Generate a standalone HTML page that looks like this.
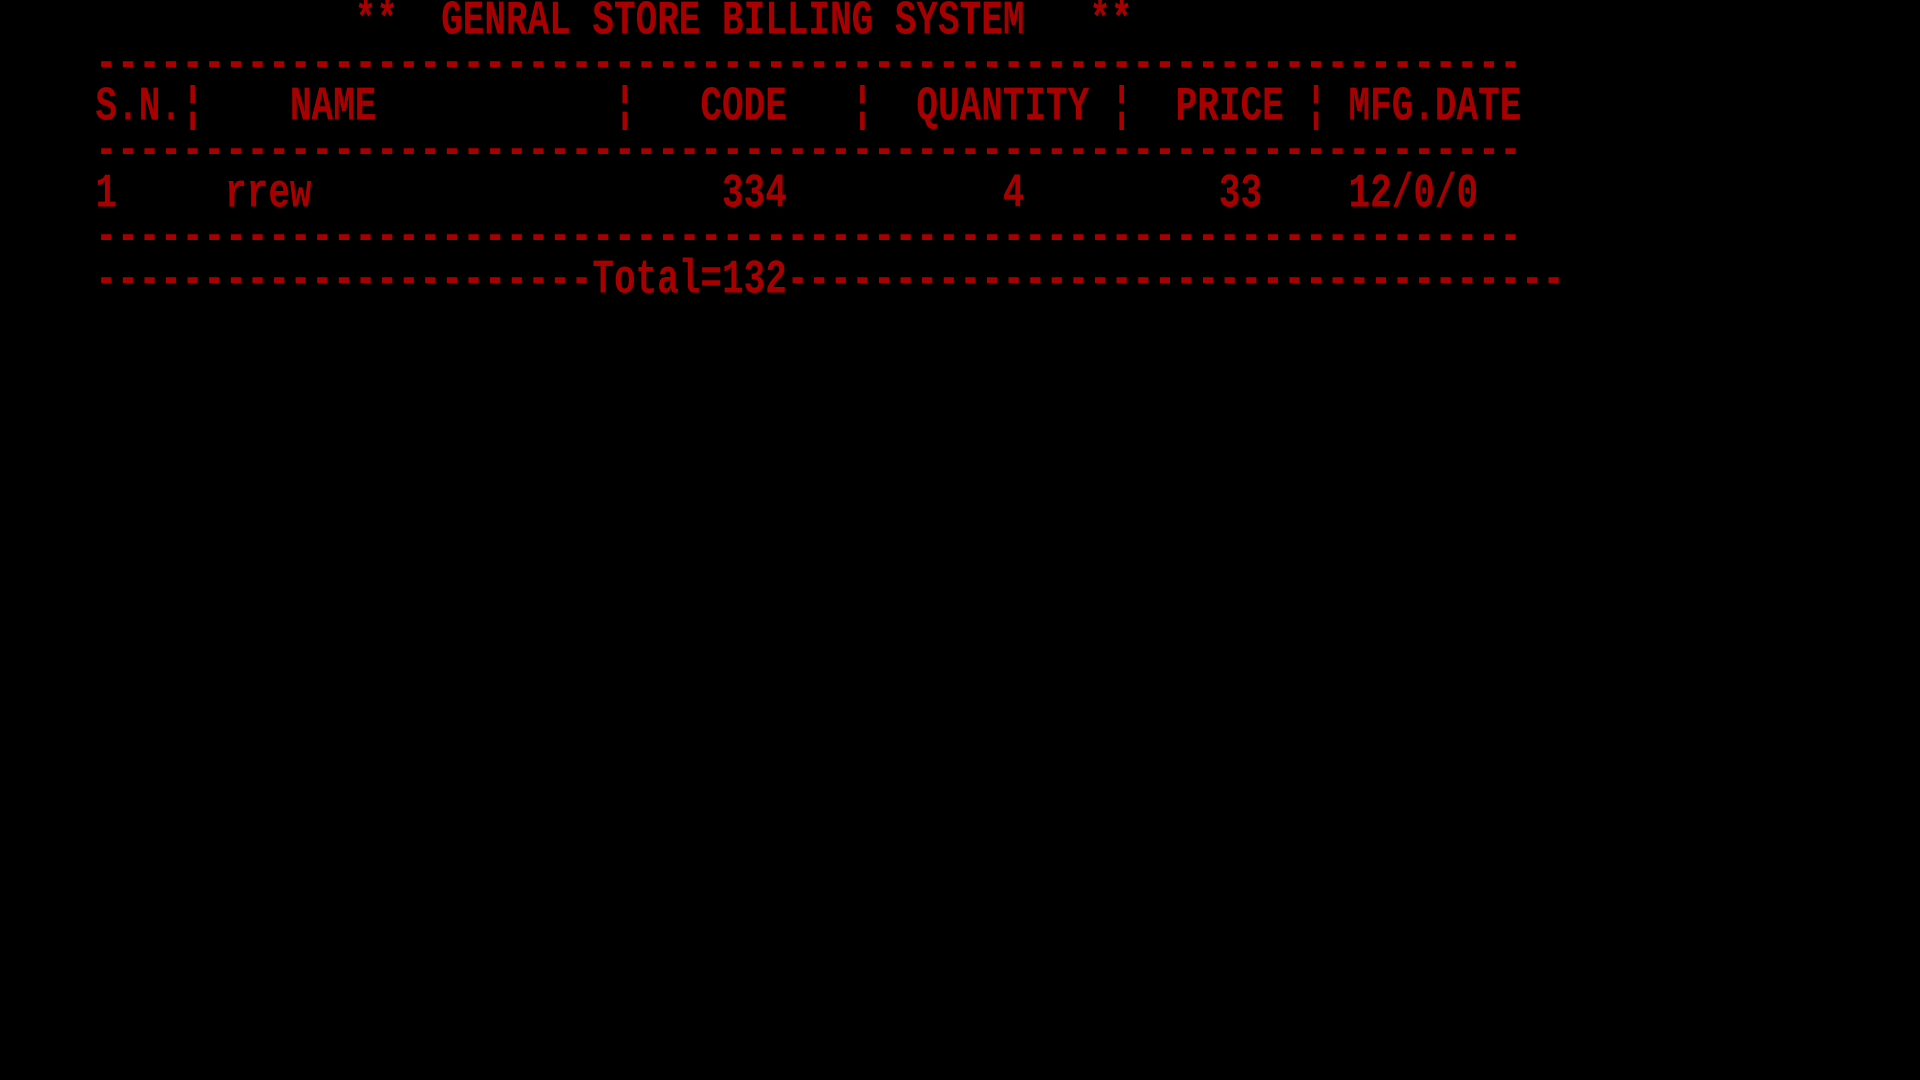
<!DOCTYPE html>
<html><head><meta charset="utf-8"><style>
html,body{margin:0;padding:0;background:#000;width:1920px;height:1080px;overflow:hidden}
.scr{position:absolute;left:95.5px;top:0px}
.l{height:43.2px;line-height:43.2px;white-space:pre;font-family:"Liberation Mono",monospace;font-size:36px;font-weight:bold;color:#a80000}
.l span{display:inline-block;transform:scaleY(1.35);transform-origin:50% 55%}
</style></head><body>
<div class="scr">
<div class="l"><span>            **  GENRAL STORE BILLING SYSTEM   **</span></div>
<div class="l"><span>------------------------------------------------------------------</span></div>
<div class="l"><span>S.N.¦    NAME           ¦   CODE   ¦  QUANTITY ¦  PRICE ¦ MFG.DATE</span></div>
<div class="l"><span>------------------------------------------------------------------</span></div>
<div class="l"><span>1     rrew                   334          4         33    12/0/0</span></div>
<div class="l"><span>------------------------------------------------------------------</span></div>
<div class="l"><span>-----------------------Total=132------------------------------------</span></div>
</div>
</body></html>
